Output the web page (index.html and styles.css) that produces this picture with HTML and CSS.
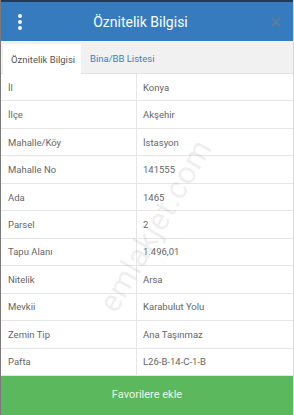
FILE: index.html
```html
<!DOCTYPE html>
<html lang="tr">
<head>
<meta charset="utf-8">
<title>Öznitelik Bilgisi</title>
<link rel="stylesheet" href="styles.css">
</head>
<body>
<div class="app">
  <div class="topstrip"></div>
  <header class="header">
    <div class="kebab"><span></span><span></span><span></span></div>
    <h1 class="title">Öznitelik Bilgisi</h1>
    <svg class="close" width="10" height="10" viewBox="0 0 10 10"><path d="M1.5 1.5 L8.5 8.5 M8.5 1.5 L1.5 8.5" stroke="currentColor" stroke-width="2.4" stroke-linecap="round"/></svg>
  </header>
  <nav class="tabs">
    <div class="tab active">Öznitelik Bilgisi</div>
    <div class="tab link">Bina/BB Listesi</div>
  </nav>
  <div class="table">
    <div class="row"><div class="key">İl</div><div class="val">Konya</div></div>
    <div class="row"><div class="key">İlçe</div><div class="val">Akşehir</div></div>
    <div class="row"><div class="key">Mahalle/Köy</div><div class="val">İstasyon</div></div>
    <div class="row"><div class="key">Mahalle No</div><div class="val">141555</div></div>
    <div class="row"><div class="key">Ada</div><div class="val">1465</div></div>
    <div class="row"><div class="key">Parsel</div><div class="val">2</div></div>
    <div class="row"><div class="key">Tapu Alanı</div><div class="val">1.496,01</div></div>
    <div class="row"><div class="key">Nitelik</div><div class="val">Arsa</div></div>
    <div class="row"><div class="key">Mevkii</div><div class="val">Karabulut Yolu</div></div>
    <div class="row"><div class="key">Zemin Tip</div><div class="val">Ana Taşınmaz</div></div>
    <div class="row"><div class="key">Pafta</div><div class="val">L26-B-14-C-1-B</div></div>
    <div class="watermark">emlakjet.com</div>
  </div>
  <button class="fav">Favorilere ekle</button>
</div>
</body>
</html>
```

FILE: styles.css
```css
* { box-sizing: border-box; }
html, body { margin: 0; padding: 0; }
body {
  width: 294px;
  height: 415px;
  overflow: hidden;
  font-family: Roboto, "Liberation Sans", sans-serif;
  background: #fff;
}
.app {
  display: flex;
  flex-direction: column;
  height: 415px;
  border-left: 1px solid #7a7a7a;
  border-right: 1px solid #d8d8d8;
}
.topstrip {
  height: 2px;
  background: #1f3a5a;
}
.header {
  height: 39px;
  background: #357bbd;
  display: flex;
  align-items: center;
}
.kebab {
  width: 40px;
  display: flex;
  flex-direction: column;
  align-items: center;
  gap: 2px;
  margin-left: -1px;
}
.kebab span {
  width: 4px;
  height: 4px;
  border-radius: 50%;
  background: #f2f6fb;
}
.title {
  flex: 1;
  margin: 0;
  text-align: center;
  color: #fff;
  font-size: 14px;
  font-weight: 400;
}
.close {
  width: 10px;
  height: 10px;
  margin: 0 12px 0 30px;
  color: #5a7ca3;
}
.tabs {
  height: 33px;
  background: #f1f1f1;
  display: flex;
  align-items: stretch;
  padding: 3px 0 0 2px;
  border-bottom: 1px solid #e2e2e2;
}
.tab {
  font-size: 9.5px;
  display: flex;
  align-items: center;
  white-space: nowrap;
}
.tab.active {
  background: #fff;
  color: #555;
  width: 78px;
  padding: 0 0 0 8px;
  margin-bottom: -1px;
}
.tab.link {
  color: #3d7fbf;
  padding-left: 9px;
}
.table {
  height: 302px;
  display: flex;
  flex-direction: column;
  position: relative;
  overflow: hidden;
}
.row {
  flex: 1;
  display: flex;
  border-bottom: 1px solid #e6e6e6;
  font-size: 9.5px;
  color: #666;
}
.row:last-child { border-bottom: none; }
.key {
  width: 136px;
  padding-left: 7px;
  display: flex;
  align-items: center;
  border-right: 1px solid #e6e6e6;
}
.val {
  flex: 1;
  padding-left: 6px;
  display: flex;
  align-items: center;
}
.watermark {
  position: absolute;
  left: 90px;
  top: 226px;
  font-size: 31px;
  color: rgba(120, 120, 120, 0.13);
  transform: rotate(-60deg);
  transform-origin: 0 0;
  white-space: nowrap;
  pointer-events: none;
  letter-spacing: 0.5px;
}
.fav {
  flex: 1;
  border: none;
  margin: 0;
  background: #5cb85c;
  color: #e9f6e9;
  font-family: Roboto, "Liberation Sans", sans-serif;
  font-size: 11px;
  padding: 0 0 2px 0;
}
```
